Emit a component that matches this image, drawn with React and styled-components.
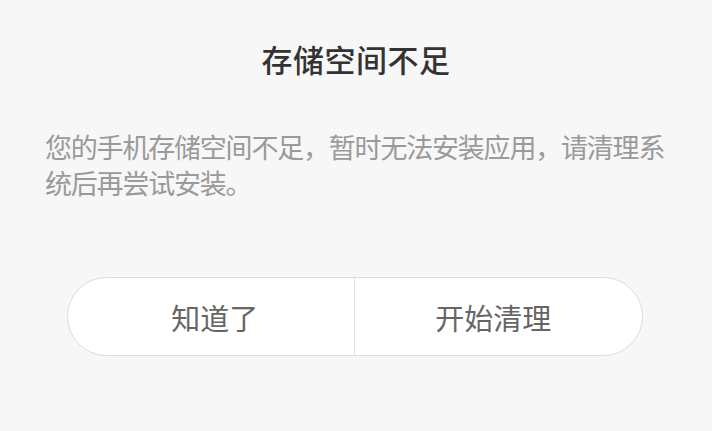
import React from 'react';
import styled, { createGlobalStyle } from 'styled-components';

const GlobalStyle = createGlobalStyle`
    html, body {
        margin: 0;
        padding: 0;
        background-color: #f7f7f7;
    }
    body {
        font-family: "Noto Sans CJK SC", "Noto Sans", sans-serif;
    }
`;

const Dialog = styled.div`
    display: flex;
    flex-direction: column;
    width: 712px;
    height: 431px;
    box-sizing: border-box;
    padding-top: 39px;
    background-color: #f7f7f7;
`;

const Title = styled.h1`
    margin: 0;
    text-align: center;
    font-size: 31px;
    line-height: 40px;
    font-weight: 500;
    letter-spacing: 0.5px;
    color: #333333;
`;

const Message = styled.p`
    margin: 50px 0 0 0;
    padding: 0 35px 0 45px;
    font-size: 27px;
    line-height: 36px;
    letter-spacing: -1.2px;
    color: #9a9a9a;
`;

const ButtonBar = styled.div`
    display: flex;
    align-self: flex-start;
    width: 576px;
    height: 79px;
    margin: 76px 0 0 67px;
    box-sizing: border-box;
    border: 1px solid #dcdcdc;
    border-radius: 40px;
    background-color: #ffffff;
    overflow: hidden;
`;

const Button = styled.button`
    flex: 1;
    border: none;
    border-left: ${props => (props.divider ? '1px solid #e2e2e2' : 'none')};
    background: transparent;
    font-family: inherit;
    font-size: 29px;
    color: #666666;
    padding: ${props => (props.divider ? '0 10px 0 0' : '0 0 0 8px')};
    cursor: pointer;
`;

const App = () => {
    return (
        <>
            <GlobalStyle />
            <Dialog>
                <Title>存储空间不足</Title>
                <Message>您的手机存储空间不足，暂时无法安装应用，请清理系统后再尝试安装。</Message>
                <ButtonBar>
                    <Button>知道了</Button>
                    <Button divider>开始清理</Button>
                </ButtonBar>
            </Dialog>
        </>
    );
};

export default App;
